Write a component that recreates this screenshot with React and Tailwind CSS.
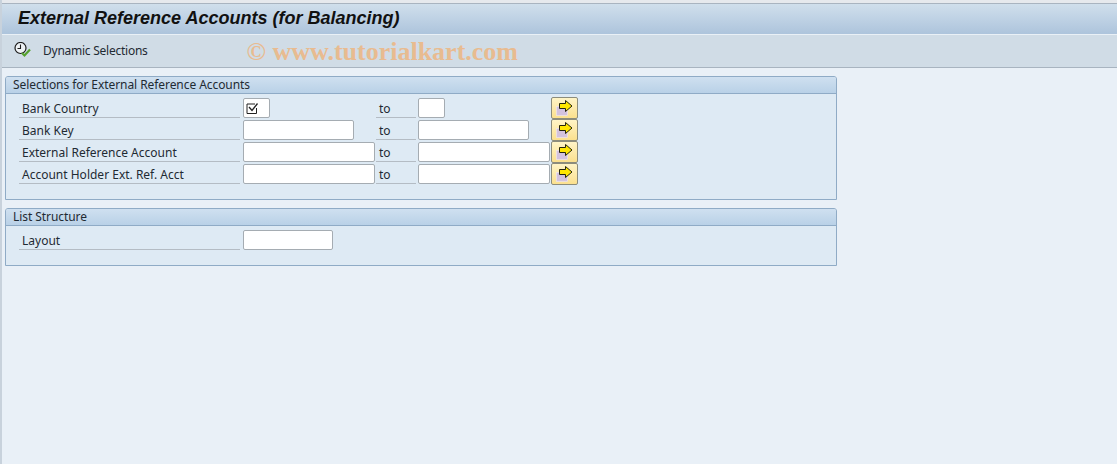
const rows = [
  { label: 'Bank Country', from: 'w-[27px]', to: 'w-[27px]', checked: true },
  { label: 'Bank Key', from: 'w-[111px]', to: 'w-[111px]' },
  { label: 'External Reference Account', from: 'w-[132px]', to: 'w-[132px]' },
  { label: 'Account Holder Ext. Ref. Acct', from: 'w-[132px]', to: 'w-[132px]' },
]

const ClockCheck = () => (
  <svg width="18" height="18" viewBox="0 0 18 18" fill="none">
    <circle cx="6.5" cy="6" r="5.5" fill="#eef2f5" stroke="#1c1c1c" strokeWidth="1.2" />
    <path d="M6.5 2.5v4H3.5" stroke="#1c1c1c" strokeWidth="1.1" />
    <path d="M8 11l2.5 2.5 5.5-6" stroke="#55a12e" strokeWidth="2.2" />
  </svg>
)

const ArrowIcon = () => (
  <svg width="18" height="16" viewBox="0 0 18 16" fill="none">
    <rect x="0.5" y="6.5" width="11" height="9" fill="#d3c2de" stroke="#efe8f3" strokeWidth="0.6" />
    <path d="M3.5 3.5H9.5V0.5L16 6L9.5 11.5V8.5H3.5z" fill="#ffe600" stroke="#24240e" strokeWidth="1" />
  </svg>
)

const CheckMark = () => (
  <svg width="13" height="13" viewBox="0 0 13 13" fill="none">
    <path d="M10.5 6v5.5h-9.5v-9.5h8" stroke="#222" strokeWidth="1" />
    <path d="M3 5l3 3.5 5.5-7" stroke="#222" strokeWidth="1.3" />
  </svg>
)

const Field = ({ width, checked }) => (
  <div className={`${width} h-5 bg-white border border-[#a5acb2] rounded-[2px] flex items-center pl-[2px] shrink-0`}>
    {checked && <CheckMark />}
  </div>
)

const GroupHeader = ({ children }) => (
  <div className="h-[17px] pl-[7px] flex items-center text-[12px] tracking-[-0.07px] leading-none text-[#1f2a33] bg-gradient-to-b from-[#cfe0f0] to-[#b9d1e7] border-b border-[#8fabc6] rounded-t-[2px]">
    {children}
  </div>
)

export default function App() {
  return (
    <div
      className="w-[1117px] h-[464px] overflow-hidden bg-[#e9f0f7] border-l-2 border-[#c8d2dc]"
      style={{ fontFamily: '"Noto Sans", sans-serif' }}
    >
      {/* Title bar */}
      <div className="h-[3px] bg-[#e6e9ed] border-b border-[#a9b4c0] box-content" />
      <div className="h-[31px] pl-4 pb-[2px] flex items-center bg-gradient-to-b from-[#d0dfec] to-[#adc4dc] border-b border-[#e9f0f6]">
        <span className="text-[18px] font-bold italic text-[#111]" style={{ fontFamily: '"Liberation Sans", sans-serif' }}>
          External Reference Accounts (for Balancing)
        </span>
      </div>

      {/* Toolbar */}
      <div className="h-[33px] flex items-center bg-[#d0dce6] border-b border-[#a8b4c0]">
        <div className="ml-[12px] w-[18px]"><ClockCheck /></div>
        <span className="ml-[11px] text-[12px] tracking-[-0.25px] text-[#1f2a33]">Dynamic Selections</span>
        <span className="ml-[99px] mt-[2px] text-[26px] leading-none font-bold text-[#e8bb90]" style={{ fontFamily: '"Liberation Serif", serif' }}>
          © www.tutorialkart.com
        </span>
      </div>

      {/* Selections */}
      <div className="mt-2 ml-[3px] w-[832px] h-[124px] border border-[#8fabc6] rounded-t-[3px] bg-[#deeaf4]">
        <GroupHeader>Selections for External Reference Accounts</GroupHeader>
        <div className="pt-[2px] pl-[13px] flex flex-col">
          {rows.map((row) => (
            <div key={row.label} className="flex h-[22px] items-end">
              <div className="w-[221px] h-[22px] pl-[3px] pt-[5px] flex items-center text-[12px] text-[#1f2a33] border-b border-[#b4bcc4] shrink-0">
                {row.label}
              </div>
              <div className="ml-[3px] w-[133px] shrink-0">
                <Field width={row.from} checked={row.checked} />
              </div>
              <div className="w-[40px] h-[22px] pl-[3px] pt-[5px] flex items-center text-[12px] text-[#1f2a33] border-b border-[#b4bcc4] shrink-0">
                to
              </div>
              <div className="ml-[2px] w-[133px] shrink-0">
                <Field width={row.to} />
              </div>
              <button className="w-[27px] h-[22px] -mb-[1px] flex items-center justify-center bg-gradient-to-b from-[#fff4c6] to-[#fbe08e] border border-[#8c8c7c] rounded-[2px] shrink-0">
                <ArrowIcon />
              </button>
            </div>
          ))}
        </div>
      </div>

      {/* List structure */}
      <div className="mt-2 ml-[3px] w-[832px] h-[58px] border border-[#8fabc6] rounded-t-[3px] bg-[#deeaf4]">
        <GroupHeader>List Structure</GroupHeader>
        <div className="pt-[2px] pl-[13px] flex">
          <div className="flex h-[22px] items-end">
            <div className="w-[221px] h-[22px] pl-[3px] pt-[5px] flex items-center text-[12px] text-[#1f2a33] border-b border-[#b4bcc4] shrink-0">
              Layout
            </div>
            <div className="ml-[3px]">
              <Field width="w-[90px]" />
            </div>
          </div>
        </div>
      </div>
    </div>
  )
}
